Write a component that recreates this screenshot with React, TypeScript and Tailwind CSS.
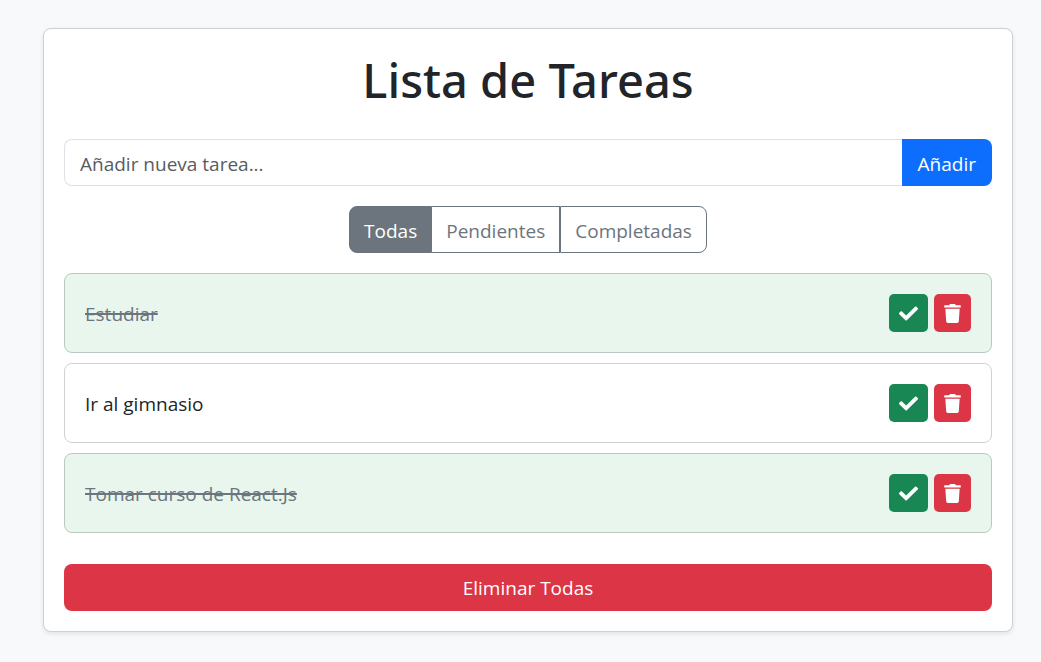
import { useState } from "react";
import type { FormEvent } from "react";
import { FaCheck, FaTrash } from "react-icons/fa";

type Task = { id: number; text: string; done: boolean };
type Filter = "Todas" | "Pendientes" | "Completadas";

const FILTERS: Filter[] = ["Todas", "Pendientes", "Completadas"];

const INITIAL_TASKS: Task[] = [
  { id: 1, text: "Estudiar", done: true },
  { id: 2, text: "Ir al gimnasio", done: false },
  { id: 3, text: "Tomar curso de React.Js", done: true },
];

function TaskItem({ task, onToggle, onRemove }: { task: Task; onToggle: () => void; onRemove: () => void }) {
  return (
    <li
      className={`flex items-center justify-between rounded-lg border p-5 ${
        task.done ? "border-[#bac9c0] bg-[#e8f6ed]" : "border-[#d0d1d3] bg-white"
      }`}
    >
      <span className={`pt-0.5 ${task.done ? "text-[#6c757d] line-through decoration-2" : "text-[#212529]"}`}>
        {task.text}
      </span>
      <div className="flex gap-1.5">
        <button
          type="button"
          aria-label={`Completar ${task.text}`}
          onClick={onToggle}
          className="flex h-[38px] w-[39px] items-center justify-center rounded-[5px] bg-[#198754] text-white"
        >
          <FaCheck size={19} />
        </button>
        <button
          type="button"
          aria-label={`Eliminar ${task.text}`}
          onClick={onRemove}
          className="flex h-[38px] w-[37px] items-center justify-center rounded-[5px] bg-[#dc3545] text-white"
        >
          <FaTrash size={19} />
        </button>
      </div>
    </li>
  );
}

export default function App() {
  const [tasks, setTasks] = useState<Task[]>(INITIAL_TASKS);
  const [filter, setFilter] = useState<Filter>("Todas");
  const [draft, setDraft] = useState("");

  const visible = tasks.filter((t) => filter === "Todas" || t.done === (filter === "Completadas"));

  const addTask = (event: FormEvent) => {
    event.preventDefault();
    const text = draft.trim();
    if (!text) return;
    setTasks([...tasks, { id: Date.now(), text, done: false }]);
    setDraft("");
  };

  return (
    <div className="min-h-screen bg-[#f8f9fa] pt-7 pr-7 pb-7 pl-[43px] font-['Open_Sans',sans-serif] text-[19px] leading-[30px] text-[#212529]">
      <main className="rounded-lg border border-[#cfd0d2] bg-white p-5 shadow-[0_2px_5px_rgba(0,0,0,0.09)]">
        <h1 className="mb-7 text-center font-['Noto_Sans',sans-serif] text-[47px] leading-[62px] font-medium">
          Lista de Tareas
        </h1>

        <form onSubmit={addTask} className="mb-5 flex h-[47px]">
          <input
            type="text"
            aria-label="Nueva tarea"
            placeholder="Añadir nueva tarea..."
            value={draft}
            onChange={(e) => setDraft(e.target.value)}
            className="min-w-0 flex-1 rounded-l-lg border border-r-0 border-[#dee2e6] px-[15px] pt-0.5 outline-none placeholder:text-[#595c5f]"
          />
          <button type="submit" className="rounded-r-lg bg-[#0d6efd] px-4 pt-0.5 text-white">
            Añadir
          </button>
        </form>

        <div role="group" aria-label="Filtrar tareas" className="mb-5 flex justify-center">
          {FILTERS.map((name) => (
            <button
              key={name}
              type="button"
              aria-pressed={filter === name}
              onClick={() => setFilter(name)}
              className={`h-[47px] border border-[#6c757d] px-3.5 pt-0.5 first:rounded-l-lg last:rounded-r-lg not-first:border-l-0 last:border-l ${
                filter === name ? "bg-[#6c757d] text-white" : "bg-white text-[#6c757d]"
              }`}
            >
              {name}
            </button>
          ))}
        </div>

        <ul className="mb-[31px] flex flex-col gap-2.5">
          {visible.map((task) => (
            <TaskItem
              key={task.id}
              task={task}
              onToggle={() => setTasks(tasks.map((t) => (t.id === task.id ? { ...t, done: !t.done } : t)))}
              onRemove={() => setTasks(tasks.filter((t) => t.id !== task.id))}
            />
          ))}
        </ul>

        <button
          type="button"
          onClick={() => setTasks([])}
          className="h-[47px] w-full rounded-lg bg-[#dc3545] text-white"
        >
          Eliminar Todas
        </button>
      </main>
    </div>
  );
}
